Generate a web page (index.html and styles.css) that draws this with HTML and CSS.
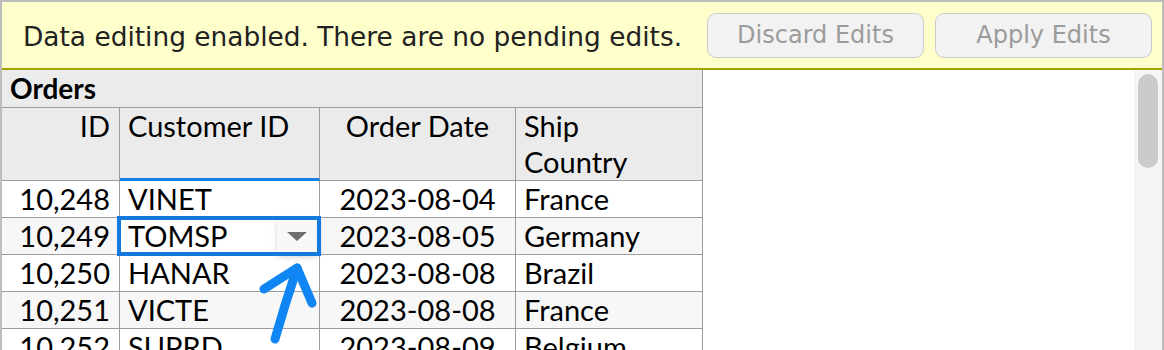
FILE: index.html
```html
<!DOCTYPE html>
<html>
<head>
<meta charset="utf-8">
<link rel="stylesheet" href="styles.css">
</head>
<body>
<div class="frame">
  <div class="toolbar">
    <div class="status">Data editing enabled. There are no pending edits.</div>
    <div class="actions">
      <button class="btn">Discard Edits</button>
      <button class="btn">Apply Edits</button>
    </div>
  </div>
  <div class="content">
    <div class="table-wrap">
      <div class="grid">
        <div class="caption">Orders</div>
        <div class="cell head right">ID</div>
        <div class="cell head sorted">Customer ID</div>
        <div class="cell head center">Order Date</div>
        <div class="cell head">Ship<br>Country</div>

        <div class="cell right">10,248</div>
        <div class="cell">VINET</div>
        <div class="cell center">2023-08-04</div>
        <div class="cell">France</div>

        <div class="cell alt right">10,249</div>
        <div class="cell editing">
          <div class="editor">
            <span class="editor-text">TOMSP</span>
            <span class="dropdown"><span class="tri"></span></span>
          </div>
        </div>
        <div class="cell alt center">2023-08-05</div>
        <div class="cell alt">Germany</div>

        <div class="cell right">10,250</div>
        <div class="cell">HANAR</div>
        <div class="cell center">2023-08-08</div>
        <div class="cell">Brazil</div>

        <div class="cell alt right">10,251</div>
        <div class="cell alt">VICTE</div>
        <div class="cell alt center">2023-08-08</div>
        <div class="cell alt">France</div>

        <div class="cell right">10,252</div>
        <div class="cell">SUPRD</div>
        <div class="cell center">2023-08-09</div>
        <div class="cell">Belgium</div>
      </div>
    </div>
    <div class="track"><div class="thumb"></div></div>
  </div>
  <svg class="annot" width="1164" height="350" viewBox="0 0 1164 350">
    <path d="M275 339 Q285 304 297 268" />
    <path d="M264 289 L297 268 L312 303" />
  </svg>
</div>
</body>
</html>
```
FILE: styles.css
```css
html, body {
  margin: 0;
  padding: 0;
  background: #ffffff;
}
.frame {
  position: relative;
  width: 1164px;
  height: 350px;
  box-sizing: border-box;
  border: 2px solid #bdbdbd;
  border-bottom: none;
  display: flex;
  flex-direction: column;
  overflow: hidden;
}
.toolbar {
  height: 66px;
  flex: none;
  background: #ffffcc;
  border-bottom: 2px solid #a3a200;
  display: flex;
  align-items: center;
  padding: 0 10px 0 21px;
  font-family: "DejaVu Sans", sans-serif;
}
.status {
  font-size: 26.4px;
  color: #222222;
  padding-top: 3px;
}
.actions {
  margin-left: auto;
  display: flex;
  gap: 11px;
}
.btn {
  width: 217px;
  height: 45px;
  box-sizing: border-box;
  border: 1.5px solid #cacaca;
  border-radius: 9px;
  background: #f2f2f2;
  color: #9b9b9b;
  font-family: "DejaVu Sans", sans-serif;
  font-size: 24px;
  padding: 0;
}
.content {
  flex: 1;
  display: flex;
  min-height: 0;
}
.table-wrap {
  flex: 1;
  background: #ffffff;
  overflow: hidden;
}
.track {
  width: 28px;
  flex: none;
  background: #f5f5f5;
  padding: 4px 0 0 4px;
  box-sizing: border-box;
}
.thumb {
  width: 20px;
  height: 94px;
  border-radius: 10px;
  background: #cbcbcb;
}
.grid {
  display: grid;
  grid-template-columns: 118px 200px 196px 187px;
  width: 701px;
  font-family: Lato, sans-serif;
  font-size: 29px;
  color: #000000;
}
.caption {
  grid-column: 1 / -1;
  background: #ebebeb;
  font-weight: bold;
  font-size: 28px;
  line-height: 37px;
  padding-left: 8px;
  border-right: 1px solid #9c9c9c;
  border-bottom: 1px solid #9c9c9c;
}
.cell {
  box-sizing: border-box;
  border-right: 1px solid #9c9c9c;
  border-bottom: 1px solid #9c9c9c;
  padding: 0 8px;
  line-height: 36px;
  white-space: nowrap;
  background: #ffffff;
}
.cell.head {
  background: #ebebeb;
  white-space: normal;
}
.cell.sorted {
  border-bottom: 3px solid #1480e2;
}
.cell.right { text-align: right; padding-right: 9px; }
.cell.center { text-align: center; }
.cell.alt { background: #f7f7f7; }
.cell.editing {
  position: relative;
  z-index: 2;
}
.editor {
  position: absolute;
  top: -2px;
  left: -3px;
  width: 204px;
  height: 40px;
  box-sizing: border-box;
  padding: 4px;
  background: #ffffff;
  display: flex;
}
.editor::after {
  content: "";
  position: absolute;
  inset: 0;
  border: 4px solid #1479dc;
  z-index: 3;
  pointer-events: none;
}
.editor-text {
  flex: 1;
  padding-left: 7px;
  line-height: 32px;
}
.dropdown {
  position: relative;
  z-index: 1;
  width: 40px;
  margin-top: -2px;
  margin-bottom: -1px;
  background: #f8f8f8;
  box-shadow: 1px 3px 7px rgba(0, 0, 0, 0.22);
  display: flex;
  align-items: center;
  justify-content: center;
}
.tri {
  width: 0;
  height: 0;
  border-left: 10px solid transparent;
  border-right: 10px solid transparent;
  border-top: 9px solid #6e6e6e;
  margin-top: 2px;
}
.annot {
  position: absolute;
  left: -2px;
  top: -2px;
  z-index: 5;
  pointer-events: none;
  fill: none;
  stroke: #0f86f3;
  stroke-width: 9;
  stroke-linecap: round;
  stroke-linejoin: round;
}
```
